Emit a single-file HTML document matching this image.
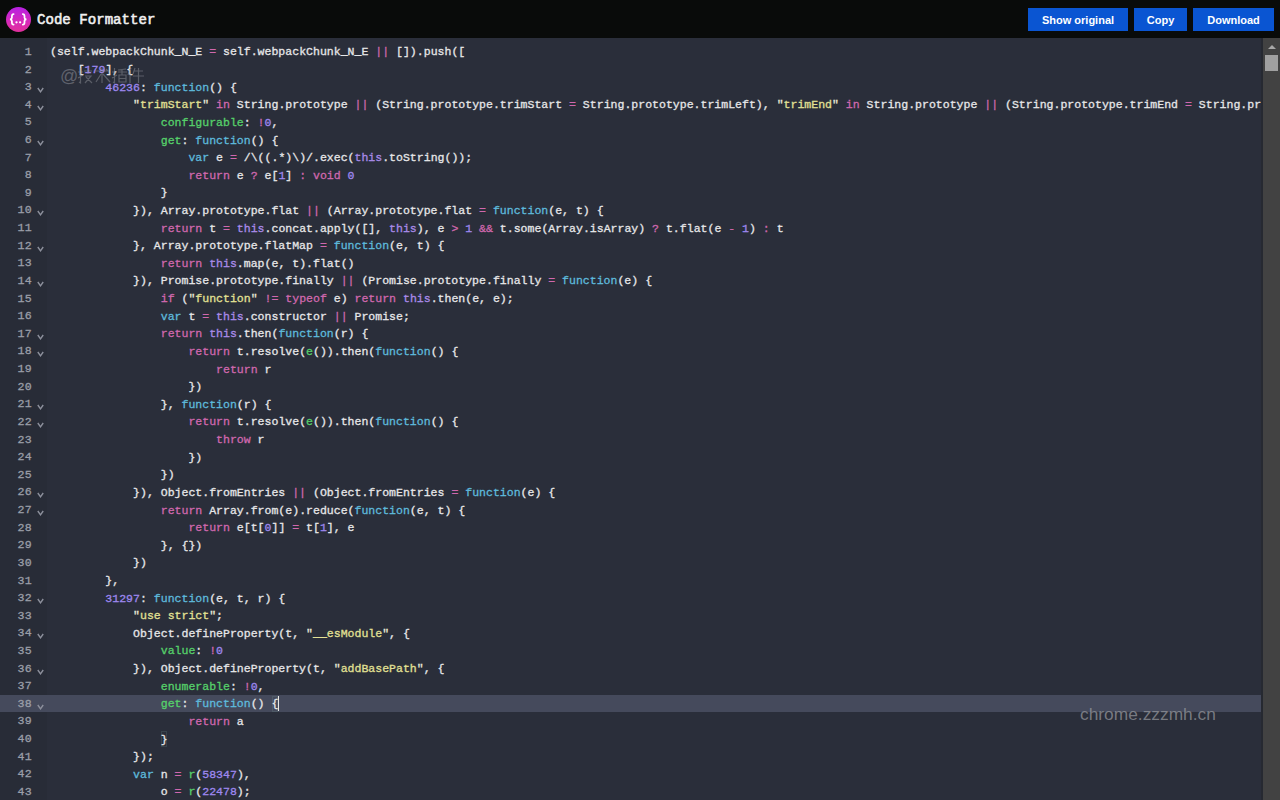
<!DOCTYPE html>
<html><head><meta charset="utf-8">
<style>
html,body{margin:0;padding:0;width:1280px;height:800px;overflow:hidden;background:#2a2e3a;}
#hdr{position:absolute;left:0;top:0;width:1280px;height:38px;background:#090b0a;}
#logo{position:absolute;left:6px;top:7px;width:25px;height:25px;border-radius:50%;background:linear-gradient(180deg,#b620e4 0%,#d82ab8 60%,#e0309a 100%);}
#logo span{position:absolute;left:0;top:0;width:25px;height:25px;line-height:25px;text-align:center;color:#fff;font:bold 11px/25px "Liberation Mono",monospace;letter-spacing:-1px;}
#title{position:absolute;left:37px;top:1.5px;height:37px;color:#f0f0f0;font:14.1px/37px "Liberation Mono",monospace;-webkit-text-stroke:0.55px #f0f0f0;}
.btn{position:absolute;top:8px;height:23px;padding-top:0.5px;box-sizing:border-box;background:#0a55d2;color:#fff;font:bold 11px/23px "Liberation Sans",sans-serif;text-align:center;}
#ed{position:absolute;left:0;top:37px;width:1263px;height:763px;background:#2a2e3a;overflow:hidden;}
.ln{position:absolute;left:0;height:17.62px;width:1263px;white-space:pre;font:11.54px/17.62px "Liberation Mono",monospace;color:#e6e6e8;-webkit-text-stroke:0.3px currentColor;}
.ln i{font-style:normal;}
.num{position:absolute;right:1231px;top:-0.5px;color:#9a9ea8;font-size:11.6px;letter-spacing:0.3px;}
.fd{position:absolute;left:36.5px;top:8.5px;}
.code{position:absolute;left:50px;top:0;}
.p{color:#d068ae}.b{color:#5ebadc}.g{color:#56d06a}.n{color:#9e88f0}.s{color:#e2e094}.q{color:#e8e8d8}.u{color:#a88ae8}
#active{position:absolute;left:0;top:695px;width:1263px;height:17px;background:#454a5c;}
#sb{position:absolute;left:1263px;top:38px;width:17px;height:762px;background:#424242;}
#sbup{position:absolute;left:4.5px;top:7px;width:0;height:0;border-left:4px solid transparent;border-right:4px solid transparent;border-bottom:4px solid #a8a8a8;}
#thumb{position:absolute;left:2px;top:17px;width:13px;height:16px;background:#a0a0a0;}
#wm2{position:absolute;left:1080px;top:703.5px;font:17.35px "Liberation Sans",sans-serif;color:rgba(150,152,158,0.72);}
</style></head><body>
<div id="hdr">
  <div id="logo"></div>
  <svg id="logosvg" width="40" height="38" viewBox="0 0 40 38" style="position:absolute;left:0;top:0"><g fill="none" stroke="#fff" stroke-width="1.75" stroke-linecap="round"><path d="M13.6,14 C12.3,14 11.9,14.6 11.9,16.2 L11.9,17.7 C11.9,18.7 11.3,19.2 10,19.3 C11.3,19.4 11.9,19.9 11.9,20.9 L11.9,22.5 C11.9,24.1 12.3,24.6 13.6,24.6"/><path d="M22.8,14 C24.1,14 24.5,14.6 24.5,16.2 L24.5,17.7 C24.5,18.7 25.1,19.2 26.4,19.3 C25.1,19.4 24.5,19.9 24.5,20.9 L24.5,22.5 C24.5,24.1 24.1,24.6 22.8,24.6"/></g><g fill="#fff"><circle cx="16.5" cy="22.3" r="1.15"/><circle cx="20.1" cy="22.3" r="1.15"/></g></svg>
  <div id="title">Code Formatter</div>
  <div class="btn" style="left:1028px;width:100px">Show original</div>
  <div class="btn" style="left:1134px;width:53px">Copy</div>
  <div class="btn" style="left:1193px;width:81px">Download</div>
</div>
<div id="gutter" style="position:absolute;left:0;top:38px;width:47px;height:762px;background:#282c37"></div>
<div id="active"></div>
<div id="lines">
<div class="ln" style="top:43.40px"><span class="num">1</span><span class="code">(self.webpackChunk_N_E <i class="p">=</i> self.webpackChunk_N_E <i class="p">||</i> []).push([</span></div>
<div class="ln" style="top:61.02px"><span class="num">2</span><span class="code">    [<i class="n">179</i>], {</span></div>
<div class="ln" style="top:78.64px"><span class="num">3</span><svg class="fd" width="7" height="6" viewBox="0 0 7 6"><polyline points="0.8,1 3.5,4.8 6.2,1" fill="none" stroke="#8d909c" stroke-width="1.4"/></svg><span class="code">        <i class="n">46236</i>: <i class="b">function</i>() {</span></div>
<div class="ln" style="top:96.26px"><span class="num">4</span><svg class="fd" width="7" height="6" viewBox="0 0 7 6"><polyline points="0.8,1 3.5,4.8 6.2,1" fill="none" stroke="#8d909c" stroke-width="1.4"/></svg><span class="code">            <i class="q">"</i><i class="s">trimStart</i><i class="q">"</i> <i class="p">in</i> String.prototype <i class="p">||</i> (String.prototype.trimStart <i class="p">=</i> String.prototype.trimLeft), <i class="q">"</i><i class="s">trimEnd</i><i class="q">"</i> <i class="p">in</i> String.prototype <i class="p">||</i> (String.prototype.trimEnd <i class="p">=</i> String.prototype.trimRight), <i class="q">"</i><i class="s">description</i><i class="q">"</i> <i class="p">in</i> Symbol.prototype</span></div>
<div class="ln" style="top:113.88px"><span class="num">5</span><span class="code">                <i class="g">configurable</i>: <i class="p">!</i><i class="n">0</i>,</span></div>
<div class="ln" style="top:131.50px"><span class="num">6</span><svg class="fd" width="7" height="6" viewBox="0 0 7 6"><polyline points="0.8,1 3.5,4.8 6.2,1" fill="none" stroke="#8d909c" stroke-width="1.4"/></svg><span class="code">                <i class="g">get</i>: <i class="b">function</i>() {</span></div>
<div class="ln" style="top:149.12px"><span class="num">7</span><span class="code">                    <i class="b">var</i> e <i class="p">=</i> /\((.*)\)/.exec(<i class="u">this</i>.toString());</span></div>
<div class="ln" style="top:166.74px"><span class="num">8</span><span class="code">                    <i class="p">return</i> e <i class="p">?</i> e[<i class="n">1</i>] <i class="p">:</i> <i class="p">void</i> <i class="n">0</i></span></div>
<div class="ln" style="top:184.36px"><span class="num">9</span><span class="code">                }</span></div>
<div class="ln" style="top:201.98px"><span class="num">10</span><svg class="fd" width="7" height="6" viewBox="0 0 7 6"><polyline points="0.8,1 3.5,4.8 6.2,1" fill="none" stroke="#8d909c" stroke-width="1.4"/></svg><span class="code">            }), Array.prototype.flat <i class="p">||</i> (Array.prototype.flat <i class="p">=</i> <i class="b">function</i>(e, t) {</span></div>
<div class="ln" style="top:219.60px"><span class="num">11</span><span class="code">                <i class="p">return</i> t <i class="p">=</i> <i class="u">this</i>.concat.apply([], <i class="u">this</i>), e <i class="p">&gt;</i> <i class="n">1</i> <i class="p">&amp;&amp;</i> t.some(Array.isArray) <i class="p">?</i> t.flat(e <i class="p">-</i> <i class="n">1</i>) <i class="p">:</i> t</span></div>
<div class="ln" style="top:237.22px"><span class="num">12</span><svg class="fd" width="7" height="6" viewBox="0 0 7 6"><polyline points="0.8,1 3.5,4.8 6.2,1" fill="none" stroke="#8d909c" stroke-width="1.4"/></svg><span class="code">            }, Array.prototype.flatMap <i class="p">=</i> <i class="b">function</i>(e, t) {</span></div>
<div class="ln" style="top:254.84px"><span class="num">13</span><span class="code">                <i class="p">return</i> <i class="u">this</i>.map(e, t).flat()</span></div>
<div class="ln" style="top:272.46px"><span class="num">14</span><svg class="fd" width="7" height="6" viewBox="0 0 7 6"><polyline points="0.8,1 3.5,4.8 6.2,1" fill="none" stroke="#8d909c" stroke-width="1.4"/></svg><span class="code">            }), Promise.prototype.finally <i class="p">||</i> (Promise.prototype.finally <i class="p">=</i> <i class="b">function</i>(e) {</span></div>
<div class="ln" style="top:290.08px"><span class="num">15</span><span class="code">                <i class="p">if</i> (<i class="q">"</i><i class="s">function</i><i class="q">"</i> <i class="p">!=</i> <i class="p">typeof</i> e) <i class="p">return</i> <i class="u">this</i>.then(e, e);</span></div>
<div class="ln" style="top:307.70px"><span class="num">16</span><span class="code">                <i class="b">var</i> t <i class="p">=</i> <i class="u">this</i>.constructor <i class="p">||</i> Promise;</span></div>
<div class="ln" style="top:325.32px"><span class="num">17</span><svg class="fd" width="7" height="6" viewBox="0 0 7 6"><polyline points="0.8,1 3.5,4.8 6.2,1" fill="none" stroke="#8d909c" stroke-width="1.4"/></svg><span class="code">                <i class="p">return</i> <i class="u">this</i>.then(<i class="b">function</i>(r) {</span></div>
<div class="ln" style="top:342.94px"><span class="num">18</span><svg class="fd" width="7" height="6" viewBox="0 0 7 6"><polyline points="0.8,1 3.5,4.8 6.2,1" fill="none" stroke="#8d909c" stroke-width="1.4"/></svg><span class="code">                    <i class="p">return</i> t.resolve(<i class="g">e</i>()).then(<i class="b">function</i>() {</span></div>
<div class="ln" style="top:360.56px"><span class="num">19</span><span class="code">                        <i class="p">return</i> r</span></div>
<div class="ln" style="top:378.18px"><span class="num">20</span><span class="code">                    })</span></div>
<div class="ln" style="top:395.80px"><span class="num">21</span><svg class="fd" width="7" height="6" viewBox="0 0 7 6"><polyline points="0.8,1 3.5,4.8 6.2,1" fill="none" stroke="#8d909c" stroke-width="1.4"/></svg><span class="code">                }, <i class="b">function</i>(r) {</span></div>
<div class="ln" style="top:413.42px"><span class="num">22</span><svg class="fd" width="7" height="6" viewBox="0 0 7 6"><polyline points="0.8,1 3.5,4.8 6.2,1" fill="none" stroke="#8d909c" stroke-width="1.4"/></svg><span class="code">                    <i class="p">return</i> t.resolve(<i class="g">e</i>()).then(<i class="b">function</i>() {</span></div>
<div class="ln" style="top:431.04px"><span class="num">23</span><span class="code">                        <i class="p">throw</i> r</span></div>
<div class="ln" style="top:448.66px"><span class="num">24</span><span class="code">                    })</span></div>
<div class="ln" style="top:466.28px"><span class="num">25</span><span class="code">                })</span></div>
<div class="ln" style="top:483.90px"><span class="num">26</span><svg class="fd" width="7" height="6" viewBox="0 0 7 6"><polyline points="0.8,1 3.5,4.8 6.2,1" fill="none" stroke="#8d909c" stroke-width="1.4"/></svg><span class="code">            }), Object.fromEntries <i class="p">||</i> (Object.fromEntries <i class="p">=</i> <i class="b">function</i>(e) {</span></div>
<div class="ln" style="top:501.52px"><span class="num">27</span><svg class="fd" width="7" height="6" viewBox="0 0 7 6"><polyline points="0.8,1 3.5,4.8 6.2,1" fill="none" stroke="#8d909c" stroke-width="1.4"/></svg><span class="code">                <i class="p">return</i> Array.from(e).reduce(<i class="b">function</i>(e, t) {</span></div>
<div class="ln" style="top:519.14px"><span class="num">28</span><span class="code">                    <i class="p">return</i> e[t[<i class="n">0</i>]] <i class="p">=</i> t[<i class="n">1</i>], e</span></div>
<div class="ln" style="top:536.76px"><span class="num">29</span><span class="code">                }, {})</span></div>
<div class="ln" style="top:554.38px"><span class="num">30</span><span class="code">            })</span></div>
<div class="ln" style="top:572.00px"><span class="num">31</span><span class="code">        },</span></div>
<div class="ln" style="top:589.62px"><span class="num">32</span><svg class="fd" width="7" height="6" viewBox="0 0 7 6"><polyline points="0.8,1 3.5,4.8 6.2,1" fill="none" stroke="#8d909c" stroke-width="1.4"/></svg><span class="code">        <i class="n">31297</i>: <i class="b">function</i>(e, t, r) {</span></div>
<div class="ln" style="top:607.24px"><span class="num">33</span><span class="code">            <i class="q">"</i><i class="s">use strict</i><i class="q">"</i>;</span></div>
<div class="ln" style="top:624.86px"><span class="num">34</span><svg class="fd" width="7" height="6" viewBox="0 0 7 6"><polyline points="0.8,1 3.5,4.8 6.2,1" fill="none" stroke="#8d909c" stroke-width="1.4"/></svg><span class="code">            Object.defineProperty(t, <i class="q">"</i><i class="s">__esModule</i><i class="q">"</i>, {</span></div>
<div class="ln" style="top:642.48px"><span class="num">35</span><span class="code">                <i class="g">value</i>: <i class="p">!</i><i class="n">0</i></span></div>
<div class="ln" style="top:660.10px"><span class="num">36</span><svg class="fd" width="7" height="6" viewBox="0 0 7 6"><polyline points="0.8,1 3.5,4.8 6.2,1" fill="none" stroke="#8d909c" stroke-width="1.4"/></svg><span class="code">            }), Object.defineProperty(t, <i class="q">"</i><i class="s">addBasePath</i><i class="q">"</i>, {</span></div>
<div class="ln" style="top:677.72px"><span class="num">37</span><span class="code">                <i class="g">enumerable</i>: <i class="p">!</i><i class="n">0</i>,</span></div>
<div class="ln" style="top:695.34px"><span class="num">38</span><svg class="fd" width="7" height="6" viewBox="0 0 7 6"><polyline points="0.8,1 3.5,4.8 6.2,1" fill="none" stroke="#8d909c" stroke-width="1.4"/></svg><span class="code">                <i class="g">get</i>: <i class="b">function</i>() {</span></div>
<div class="ln" style="top:712.96px"><span class="num">39</span><span class="code">                    <i class="p">return</i> a</span></div>
<div class="ln" style="top:730.58px"><span class="num">40</span><span class="code">                }</span></div>
<div class="ln" style="top:748.20px"><span class="num">41</span><span class="code">            });</span></div>
<div class="ln" style="top:765.82px"><span class="num">42</span><span class="code">            <i class="b">var</i> n <i class="p">=</i> <i class="g">r</i>(<i class="n">58347</i>),</span></div>
<div class="ln" style="top:783.44px"><span class="num">43</span><span class="code">                o <i class="p">=</i> <i class="g">r</i>(<i class="n">22478</i>);</span></div>
</div>
<div id="cursor" style="position:absolute;left:278px;top:696px;width:1.2px;height:14.5px;background:#e8e8e8"></div>
<div style="position:absolute;left:271.5px;top:695.5px;width:6.5px;height:16px;box-shadow:inset 0 0 0 1px rgba(120,160,150,0.2)"></div>
<div style="position:absolute;left:160.5px;top:730.5px;width:6.5px;height:16px;box-shadow:inset 0 0 0 1px rgba(120,160,150,0.2)"></div>
<svg id="wm1" width="100" height="26" viewBox="0 0 100 26" style="position:absolute;left:55px;top:62px"><text x="5" y="19.5" font-family="Liberation Sans" font-size="18" fill="rgba(150,152,160,0.5)">@</text>
<g fill="none" stroke="rgba(150,152,160,0.45)" stroke-width="1.2">
<path d="M23,10 H28 M25.5,6 V21 L24,20 M23,16 L28,13 M29,9 H37 M33,6 V12 M30,14 H36 L30,21 M31,15 L37,21"/>
<path d="M40,9 H54 M47,6 V21 M41,20 L46,12 M48,12 L55,20 M51,7 L53,9"/>
<path d="M57,10 H62 M59.5,6 V21 L58,20 M57,16 L62,13 M63,8 L71,7 M63,10 H72 M67,7 V13 M64,13 V20 H71 V13 Z M64,16.5 H71"/>
<path d="M76,6 L73,13 M75,10 V21 M79,9 H88 M80,6 L78,12 M78,14 H89 M83.5,6 V21"/>
</g></svg>
<div style="position:absolute;left:1261px;top:38px;width:2px;height:762px;background:#262931"></div>
<div id="sb"><div id="sbup"></div><div id="thumb"></div></div>
<div id="wm2">chrome.zzzmh.cn</div>
</body></html>
